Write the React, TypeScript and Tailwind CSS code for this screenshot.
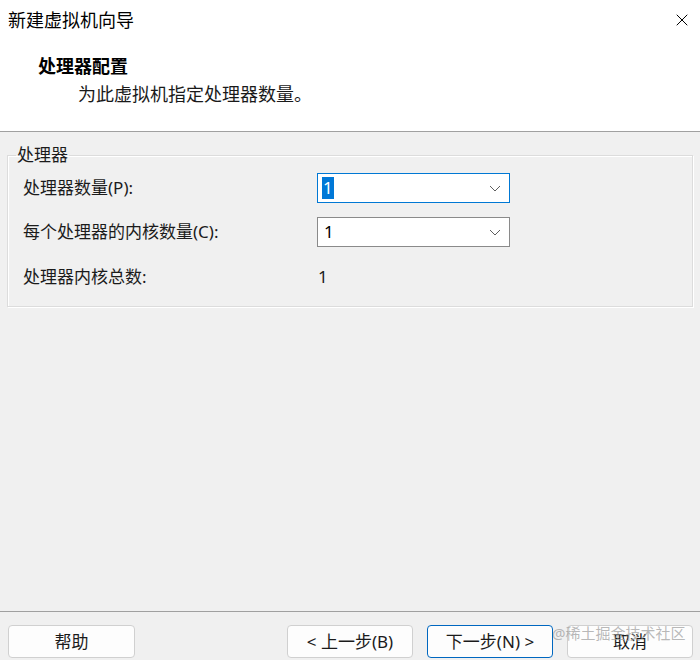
import { X } from "lucide-react";

const sans = "font-['Noto_Sans','Noto_Sans_CJK_SC',sans-serif]";

function Chevron() {
  return (
    <svg width="12" height="7" viewBox="0 0 12 7" className="shrink-0">
      <polyline points="1,1 6,6 11,1" fill="none" stroke="#5f5f5f" strokeWidth="1" />
    </svg>
  );
}

function Combo({ value, focused }: { value: string; focused?: boolean }) {
  return (
    <div
      className={`h-[30px] w-[193px] bg-white border flex items-center justify-between pl-[4px] pr-[8px] ${
        focused ? "border-[#0078d4]" : "border-[#8a8a8a]"
      }`}
    >
      {focused ? (
        <span className="bg-[#0078d7] text-white text-[17px] leading-[22px] px-[1px]">{value}</span>
      ) : (
        <span className="text-black text-[17px] leading-[22px] pl-[2px]">{value}</span>
      )}
      <Chevron />
    </div>
  );
}

function Btn({ label, primary, wide }: { label: string; primary?: boolean; wide?: boolean }) {
  return (
    <button
      className={`h-[33px] ${wide ? "w-[127px]" : "w-[126px]"} rounded-[4px] bg-[#fdfdfd] border text-[17px] text-[#1b1b1b] flex items-center justify-center ${
        primary ? "border-[#0067c0]" : "border-[#d0d0d0]"
      }`}
    >
      {label}
    </button>
  );
}

export default function App() {
  return (
    <div className={`relative w-[700px] h-[660px] bg-[#f0f0f0] flex flex-col overflow-hidden ${sans}`}>
      <div className="bg-white h-[132px] border-b border-[#a0a0a0] shrink-0">
        <div className="h-[40px] flex items-center justify-between pl-[8px] pr-[8px]">
          <span className="text-[18px] leading-[24px] text-black">新建虚拟机向导</span>
          <X className="w-[20px] h-[20px] text-black" strokeWidth={1.2} />
        </div>
        <div className="pl-[38px] pt-[14px]">
          <h1 className="text-[18px] leading-[24px] font-bold text-black">处理器配置</h1>
          <p className="pl-[40px] pt-[4px] text-[18px] leading-[24px] text-[#1a1a1a]">为此虚拟机指定处理器数量。</p>
        </div>
      </div>

      <fieldset className="mx-[7px] mt-[13px] border border-[#dcdcdc] shadow-[inset_1px_1px_0_#ffffff,1px_1px_0_#ffffff] pl-[8px] pr-[15px] pt-[8px] pb-[14px]">
        <legend className="px-[1px] text-[17px] leading-[20px] text-[#1b1b1b]">处理器</legend>
        <div className="pl-[7px] grid grid-cols-[294px_193px] gap-y-[14px] text-[17px] text-[#1b1b1b]">
          <div className="h-[30px] flex items-center">处理器数量(P):</div>
          <Combo value="1" focused />
          <div className="h-[30px] flex items-center">每个处理器的内核数量(C):</div>
          <Combo value="1" />
          <div className="h-[30px] flex items-center mt-[1px]">处理器内核总数:</div>
          <div className="h-[30px] flex items-center mt-[1px] pl-[1px]">1</div>
        </div>
      </fieldset>

      <div className="flex-1" />

      <div className="border-t border-[#a0a0a0] pt-[13px] pb-[2px] pl-[8px] pr-[7px] flex justify-between shrink-0">
        <Btn label="帮助" wide />
        <div className="flex gap-[14px]">
          <Btn label="< 上一步(B)" />
          <Btn label="下一步(N) >" primary />
          <Btn label="取消" />
        </div>
      </div>

      <div className="absolute left-[552px] top-[622px] text-[15px] leading-[22px] text-[#9a9a9a]/70 pointer-events-none">
        @稀土掘金技术社区
      </div>
    </div>
  );
}
